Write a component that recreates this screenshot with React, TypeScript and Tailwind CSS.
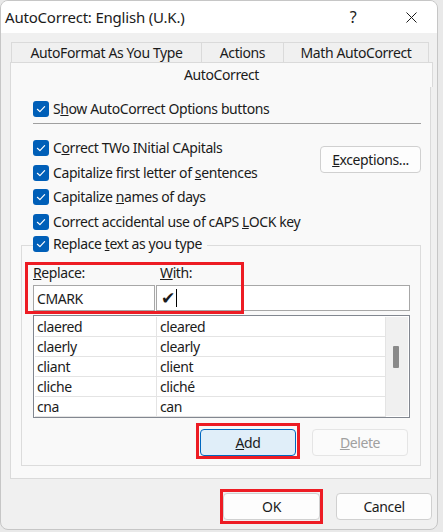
import React from "react";

function Check() {
  return (
    <span className="flex h-[16px] w-[16px] shrink-0 items-center justify-center rounded-[3px] bg-[#005fb8]">
      <svg width="12" height="12" viewBox="0 0 12 12" fill="none">
        <path d="M2.4 6.3 L4.9 8.6 L9.6 3.6" stroke="white" strokeWidth="1.2" strokeLinecap="round" strokeLinejoin="round" />
      </svg>
    </span>
  );
}

function CheckRow({ children }: { children: React.ReactNode }) {
  return (
    <div className="flex h-[16px] items-center gap-[4px] whitespace-nowrap">
      <Check />
      <span className="leading-[16px]">{children}</span>
    </div>
  );
}

const rows: [string, string][] = [
  ["claered", "cleared"],
  ["claerly", "clearly"],
  ["cliant", "client"],
  ["cliche", "cliché"],
  ["cna", "can"],
];

export default function App() {
  return (
    <div className="h-[532px] w-[443px] bg-[#e9e9e9] font-['Segoe_UI','Noto_Sans',sans-serif] text-[14px] tracking-[-0.4px] text-[#1b1b1b]">
      <div className="flex h-[530px] w-[438px] flex-col overflow-hidden rounded-[8px] border border-[#c6c6c6] bg-[#f0f0f0]">
        {/* Title bar */}
        <div className="flex h-[32px] shrink-0 items-center bg-white">
          <span className="ml-[4px] text-[15px] leading-[20px] tracking-[-0.2px]">AutoCorrect: English (U.K.)</span>
          <span className="ml-auto w-[46px] text-center text-[16px] leading-[20px]">?</span>
          <span className="ml-[12px] mr-[3px] flex w-[46px] items-center justify-center">
            <svg width="11" height="11" viewBox="0 0 11 11">
              <path d="M0.5 0.5 L10.5 10.5 M10.5 0.5 L0.5 10.5" stroke="#1b1b1b" strokeWidth="1" />
            </svg>
          </span>
        </div>

        {/* Tabs back row */}
        <div className="ml-[10px] mt-[9px] flex h-[20px]">
          <div className="flex w-[191px] items-center justify-center border-l border-r border-t border-[#dadada] leading-[18px]">AutoFormat As You Type</div>
          <div className="flex w-[82px] items-center justify-center border-r border-t border-[#dadada] leading-[18px]">Actions</div>
          <div className="flex w-[145px] items-center justify-center border-r border-t border-[#dadada] leading-[18px]">Math AutoCorrect</div>
        </div>

        {/* Selected tab strip */}
        <div className="ml-[9px] flex h-[25px] w-[423px] items-center justify-center border-l border-r border-t border-[#dadada] bg-[#f9f9f9] leading-[18px]">
          AutoCorrect
        </div>

        {/* Panel */}
        <div className="ml-[9px] flex h-[392px] w-[421px] flex-col border-b border-l border-r border-[#dadada] bg-[#f9f9f9] pl-[10px] pt-[14px]">
          <div className="ml-[12px]">
            <CheckRow>
              S<u>h</u>ow AutoCorrect Options buttons
            </CheckRow>
          </div>
          <div className="ml-[12px] mt-[6px] h-px w-[388px] bg-[#a0a0a0]" />

          <div className="ml-[12px] flex w-[388px] justify-between">
            <div className="mt-[16px] flex flex-col gap-[8.7px]">
              <CheckRow>
                C<u>o</u>rrect TWo INitial CApitals
              </CheckRow>
              <CheckRow>
                Capitalize first letter of <u>s</u>entences
              </CheckRow>
              <CheckRow>
                Capitalize <u>n</u>ames of days
              </CheckRow>
              <CheckRow>
                Correct accidental use of cAPS <u>L</u>OCK key
              </CheckRow>
            </div>
            <button className="mt-[22px] h-[27px] w-[101px] rounded-[4px] border border-[#d0d0d0] bg-[#fdfdfd] leading-[18px]">
              <u>E</u>xceptions...
            </button>
          </div>

          {/* Group box */}
          <div className="relative mt-[15px] h-[221px] w-[400px] border border-[#dcdcdc]">
            <div className="-mt-[10px] ml-[11px] w-fit bg-[#f9f9f9] pr-[5px]">
              <CheckRow>
                Replace <u>t</u>ext as you type
              </CheckRow>
            </div>

            <div className="ml-[11px] mt-[11px] flex h-[19px] items-center leading-[19px]">
              <span className="w-[127px]">
                <u>R</u>eplace:
              </span>
              <span>
                <u>W</u>ith:
              </span>
            </div>

            <div className="ml-[11px] mt-[3px] flex gap-[1px]">
              <div className="flex h-[26px] w-[122px] items-center border border-[#a7a7a7] bg-white pl-[3px]">CMARK</div>
              <div className="flex h-[26px] w-[254px] items-center border border-[#a7a7a7] bg-white pl-[4px]">
                <span className="font-['DejaVu_Sans',sans-serif] text-[17px] font-bold leading-[18px]">✔</span>
                <span className="ml-[1px] h-[18px] w-px bg-black" />
              </div>
            </div>

            {/* red highlight around replace/with */}
            <div className="pointer-events-none absolute left-[3px] top-[16px] h-[52px] w-[219px] border-[3px] border-[#ed1c24]" />

            {/* List */}
            <div className="ml-[11px] mt-[4px] flex h-[103px] w-[377px] border border-[#828790] bg-white p-px">
              <div className="flex flex-1 flex-col">
                {rows.map(([a, b]) => (
                  <div key={a} className="flex h-[20px] border-b border-[#e4e4e4]">
                    <div className="w-[122px] border-r border-[#e4e4e4] pl-[2px] leading-[19px]">{a}</div>
                    <div className="flex-1 border-r border-[#e4e4e4] pl-[3px] leading-[19px]">{b}</div>
                  </div>
                ))}
              </div>
              <div className="relative w-[22px] bg-[#f0f0f0]">
                <div className="absolute left-[7px] top-[29px] h-[22px] w-[6px] rounded-[1px] bg-[#8a8a8a]" />
              </div>
            </div>

            {/* Buttons */}
            <div className="ml-[11px] mt-[11px] flex w-[375px] justify-end gap-[16px]">
              <div className="relative">
                <button className="h-[27px] w-[96px] rounded-[4px] border border-[#0067c0] bg-[#e0eef9] leading-[18px]">
                  <u>A</u>dd
                </button>
                <div className="pointer-events-none absolute -bottom-[3px] -left-[4px] -right-[4px] -top-[6px] border-[3px] border-[#ed1c24]" />
              </div>
              <button className="h-[27px] w-[96px] rounded-[4px] border border-[#e5e5e5] bg-[#fbfbfb] leading-[18px] text-[#a0a0a0]">
                <u>D</u>elete
              </button>
            </div>
          </div>
        </div>

        {/* Footer */}
        <div className="mr-[5px] mt-[14px] flex justify-end gap-[16px]">
          <div className="relative">
            <button className="h-[27px] w-[97px] rounded-[4px] border border-[#d0d0d0] bg-[#fdfdfd] leading-[18px]">OK</button>
            <div className="pointer-events-none absolute -inset-x-[3px] -inset-y-[4px] border-[3px] border-[#ed1c24]" />
          </div>
          <button className="h-[27px] w-[96px] rounded-[4px] border border-[#d0d0d0] bg-[#fdfdfd] leading-[18px]">Cancel</button>
        </div>
      </div>
    </div>
  );
}
